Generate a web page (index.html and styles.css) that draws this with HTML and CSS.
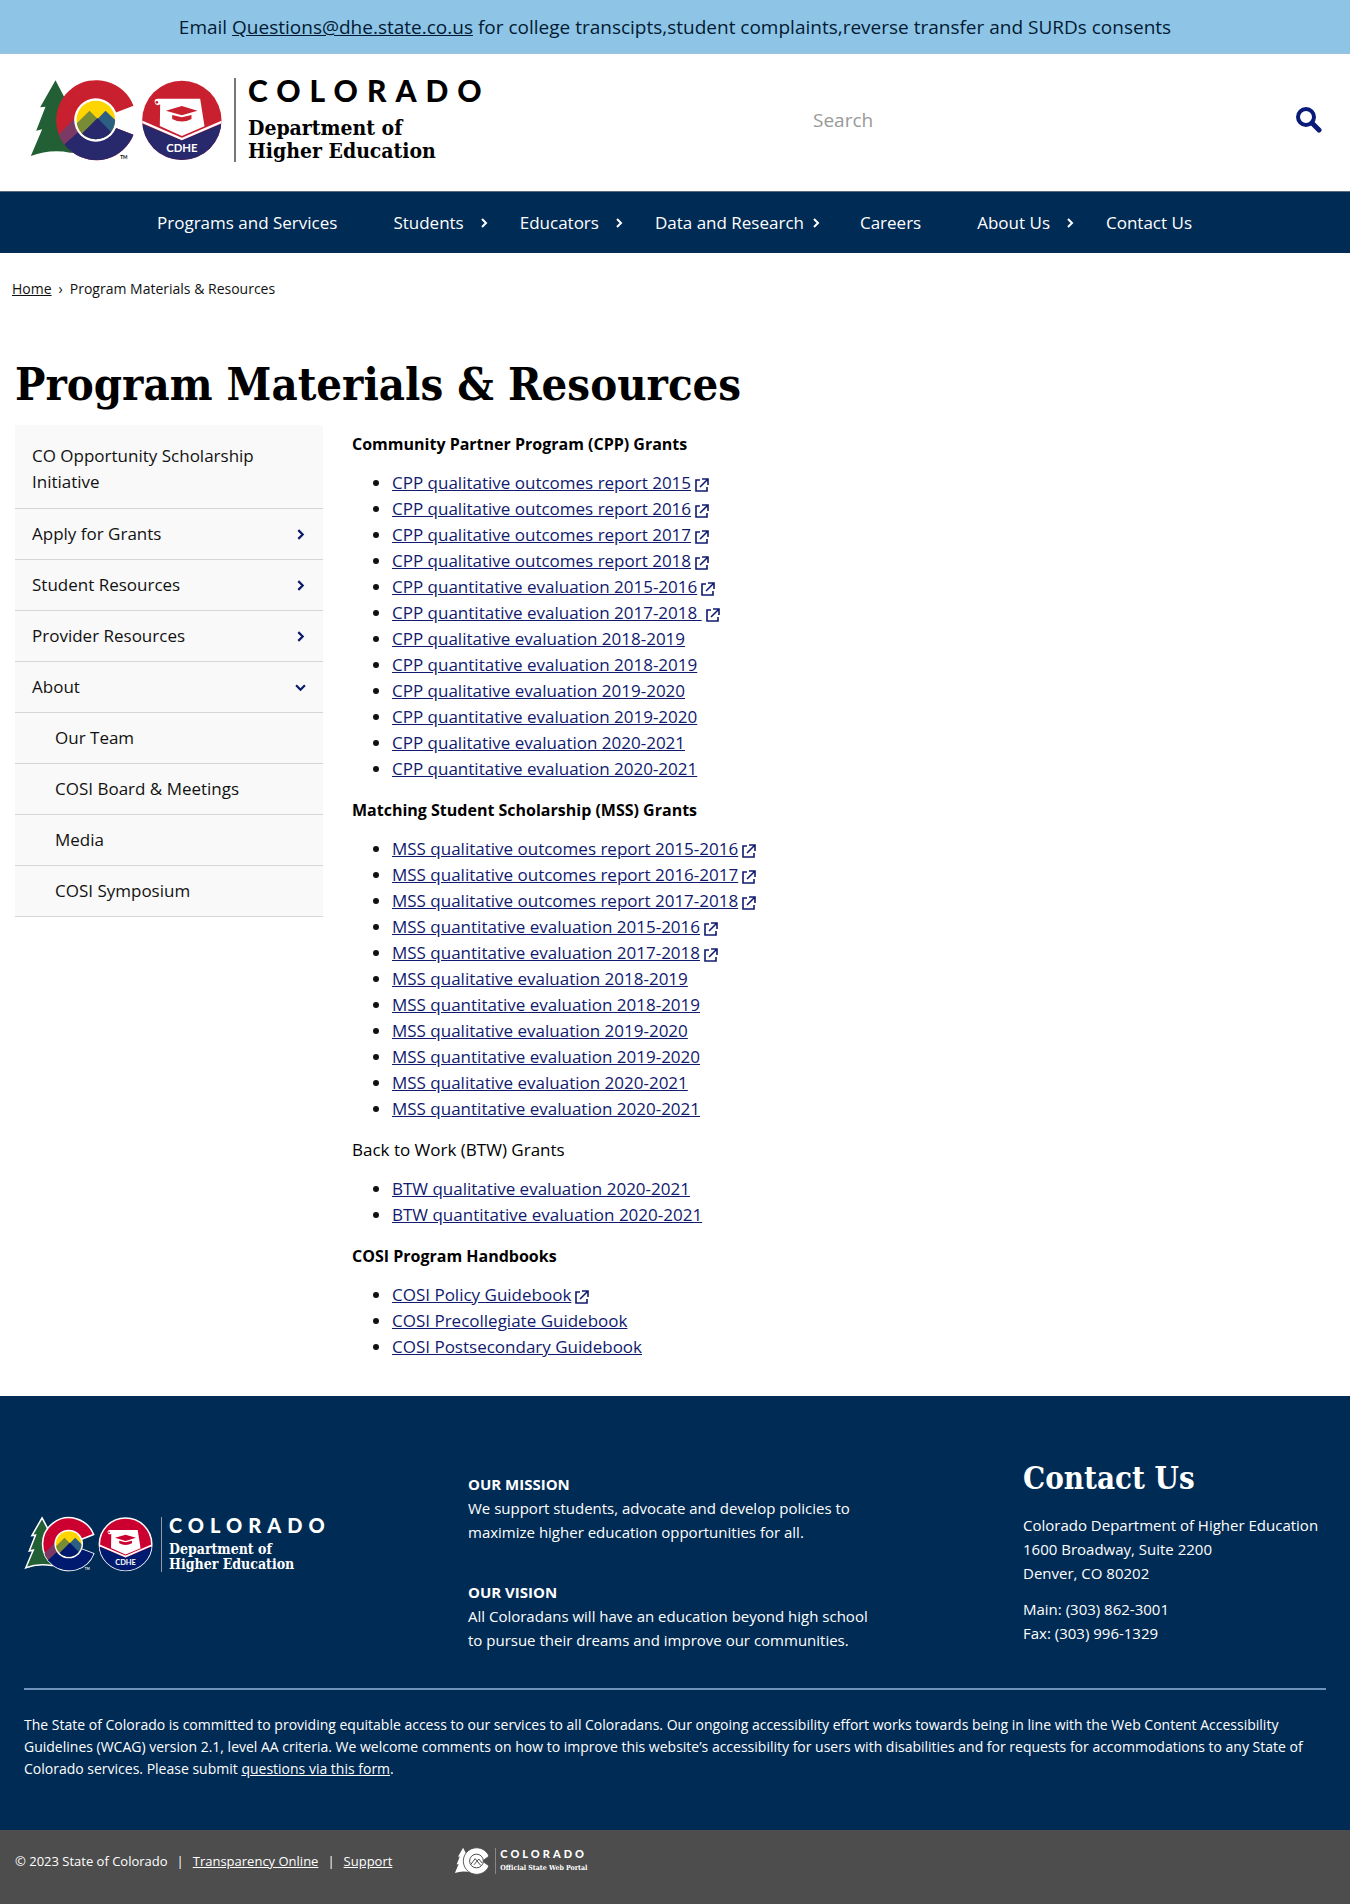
FILE: index.html
```html
<!DOCTYPE html>
<html lang="en">
<head>
<meta charset="utf-8">
<meta name="viewport" content="width=device-width, initial-scale=1">
<title>Program Materials &amp; Resources</title>
<link rel="stylesheet" href="styles.css">
</head>
<body>
<svg class="sprite" aria-hidden="true">
  <defs>
    <clipPath id="c-clip"><path d="M340 103A120 120 0 1 0 340 190L227 147Z"/></clipPath>
    <clipPath id="sun-clip"><circle cx="227" cy="146" r="58"/></clipPath>
    <clipPath id="seal-clip"><circle cx="485" cy="147" r="119"/></clipPath>
  </defs>
  <symbol id="co-mark" viewBox="24 20 590 252">
    <path class="outline" fill="#235f35" d="M106 27L60 108L76 106L48 178L66 174L32 254Q90 232 150 244L190 244L170 100L140 92Z"/>
    <path class="outline red" d="M340 103A120 120 0 1 0 340 190L227 147Z"/>
    <g clip-path="url(#c-clip)">
      <path fill="#7b3a63" d="M100 205L168 136L200 150L140 225Z"/>
      <path class="navy" d="M130 222L232 130L350 180V280H130Z"/>
    </g>
    <circle cx="227" cy="146" r="65" fill="#fff"/>
    <g clip-path="url(#sun-clip)">
      <path fill="#ffd500" d="M160 80H300V220H160Z"/>
      <path fill="#788c35" d="M160 165L208 118L256 166V210H160Z"/>
      <path fill="#2d5f83" d="M208 168L256 118L300 160V210H208Z"/>
      <path class="navy" d="M160 212L232 140L290 200V212Z"/>
    </g>
    <circle class="outline red" cx="485" cy="147" r="119"/>
    <g clip-path="url(#seal-clip)">
      <path class="navy" d="M360 155L485 207L610 155V270H360Z"/>
      <path fill="none" stroke="#fff" stroke-width="7" d="M362 150L485 203L608 150"/>
    </g>
    <path fill="#fff" d="M406 99Q398 84 412 82H540L553 165L485 194L419 164L420 99Q414 104 406 99Z"/>
    <circle class="red" cx="410" cy="93" r="4"/>
    <path class="red" d="M437 118L485 104L532 118L485 132ZM456 131L485 138L514 131V143Q485 158 456 143Z"/>
  </symbol>
  <symbol id="co-mono" viewBox="24 20 325 252">
    <path fill="#fff" d="M106 27L60 108L76 106L48 178L66 174L32 254Q90 232 150 244L190 244L170 100L140 92Z"/>
    <path fill="#fff" stroke="#4d4d4d" stroke-width="8" d="M340 103A120 120 0 1 0 340 190L280 147Z"/>
    <circle cx="227" cy="146" r="62" fill="#fff" stroke="#4d4d4d" stroke-width="9"/>
    <path fill="none" stroke="#4d4d4d" stroke-width="9" d="M175 178L215 125L265 186M205 180L248 128L278 165"/>
  </symbol>
  <symbol id="ext" viewBox="0 0 14 14">
    <path fill="none" stroke="currentColor" stroke-width="1.6" d="M5 2H1V13H12V9M7 1H13V7M13 1L5 9"/>
  </symbol>
  <symbol id="chev" viewBox="0 0 8 10">
    <path fill="none" stroke="currentColor" stroke-width="2" d="M2 1L6 5L2 9"/>
  </symbol>
</svg>

<div class="banner">Email <a href="mailto:Questions@dhe.state.co.us">Questions@dhe.state.co.us</a> for college transcipts,student complaints,reverse transfer and SURDs consents</div>

<header class="header">
  <a class="logo" href="#" aria-label="Colorado Department of Higher Education">
    <svg class="logo-mark" viewBox="24 20 590 252">
      <use href="#co-mark" x="24" y="20" width="590" height="252"/>
      <text class="seal-text" x="485" y="242" text-anchor="middle">CDHE</text>
      <text class="tm-text" x="300" y="264">TM</text>
    </svg>
    <span class="logo-words">
      <span class="logo-state">COLORADO</span>
      <span class="logo-dept">Department of<br>Higher Education</span>
    </span>
  </a>
  <form class="search">
    <input class="search-input" type="text" placeholder="Search" aria-label="Search">
    <button class="search-button" type="button" aria-label="Submit search">
      <svg class="search-icon" viewBox="0 0 26 26"><circle cx="10" cy="10" r="8" fill="none" stroke="currentColor" stroke-width="4"/><path d="M16 16L23 23" stroke="currentColor" stroke-width="5" stroke-linecap="round"/></svg>
    </button>
  </form>
</header>

<nav class="nav" aria-label="Main">
  <ul class="nav-list">
    <li><a href="#">Programs and Services</a></li>
    <li class="has-menu"><a href="#">Students</a><svg class="nav-chev"><use href="#chev"/></svg></li>
    <li class="has-menu"><a href="#">Educators</a><svg class="nav-chev"><use href="#chev"/></svg></li>
    <li class="has-menu is-long"><a href="#">Data and Research</a><svg class="nav-chev"><use href="#chev"/></svg></li>
    <li><a href="#">Careers</a></li>
    <li class="has-menu"><a href="#">About Us</a><svg class="nav-chev"><use href="#chev"/></svg></li>
    <li><a href="#">Contact Us</a></li>
  </ul>
</nav>

<nav class="crumbs" aria-label="Breadcrumb"><a href="#">Home</a><span>›</span><span>Program Materials &amp; Resources</span></nav>

<main class="main">
  <h1 class="title">Program Materials &amp; Resources</h1>
  <div class="columns">
    <aside>
      <ul class="side">
        <li class="side-first"><a href="#">CO Opportunity Scholarship Initiative</a></li>
        <li><a href="#">Apply for Grants</a><svg class="side-chev"><use href="#chev"/></svg></li>
        <li><a href="#">Student Resources</a><svg class="side-chev"><use href="#chev"/></svg></li>
        <li><a href="#">Provider Resources</a><svg class="side-chev"><use href="#chev"/></svg></li>
        <li><a href="#">About</a><svg class="side-chev is-open"><use href="#chev"/></svg></li>
        <li class="side-sub"><a href="#">Our Team</a></li>
        <li class="side-sub"><a href="#">COSI Board &amp; Meetings</a></li>
        <li class="side-sub"><a href="#">Media</a></li>
        <li class="side-sub"><a href="#">COSI Symposium</a></li>
      </ul>
    </aside>
    <article class="content">
      <p><strong>Community Partner Program (CPP) Grants</strong></p>
      <ul>
        <li><a href="#">CPP qualitative outcomes report 2015</a><svg class="ext"><use href="#ext"/></svg></li>
        <li><a href="#">CPP qualitative outcomes report 2016</a><svg class="ext"><use href="#ext"/></svg></li>
        <li><a href="#">CPP qualitative outcomes report 2017</a><svg class="ext"><use href="#ext"/></svg></li>
        <li><a href="#">CPP qualitative outcomes report 2018</a><svg class="ext"><use href="#ext"/></svg></li>
        <li><a href="#">CPP quantitative evaluation 2015-2016</a><svg class="ext"><use href="#ext"/></svg></li>
        <li><a href="#">CPP quantitative evaluation 2017-2018&nbsp;</a><svg class="ext"><use href="#ext"/></svg></li>
        <li><a href="#">CPP qualitative evaluation 2018-2019</a></li>
        <li><a href="#">CPP quantitative evaluation 2018-2019</a></li>
        <li><a href="#">CPP qualitative evaluation 2019-2020</a></li>
        <li><a href="#">CPP quantitative evaluation 2019-2020</a></li>
        <li><a href="#">CPP qualitative evaluation 2020-2021</a></li>
        <li><a href="#">CPP quantitative evaluation 2020-2021</a></li>
      </ul>
      <p><strong>Matching Student Scholarship (MSS) Grants</strong></p>
      <ul>
        <li><a href="#">MSS qualitative outcomes report 2015-2016</a><svg class="ext"><use href="#ext"/></svg></li>
        <li><a href="#">MSS qualitative outcomes report 2016-2017</a><svg class="ext"><use href="#ext"/></svg></li>
        <li><a href="#">MSS qualitative outcomes report 2017-2018</a><svg class="ext"><use href="#ext"/></svg></li>
        <li><a href="#">MSS quantitative evaluation 2015-2016</a><svg class="ext"><use href="#ext"/></svg></li>
        <li><a href="#">MSS quantitative evaluation 2017-2018</a><svg class="ext"><use href="#ext"/></svg></li>
        <li><a href="#">MSS qualitative evaluation 2018-2019</a></li>
        <li><a href="#">MSS quantitative evaluation 2018-2019</a></li>
        <li><a href="#">MSS qualitative evaluation 2019-2020</a></li>
        <li><a href="#">MSS quantitative evaluation 2019-2020</a></li>
        <li><a href="#">MSS qualitative evaluation 2020-2021</a></li>
        <li><a href="#">MSS quantitative evaluation 2020-2021</a></li>
      </ul>
      <p>Back to Work (BTW) Grants</p>
      <ul>
        <li><a href="#">BTW qualitative evaluation 2020-2021</a></li>
        <li><a href="#">BTW quantitative evaluation 2020-2021</a></li>
      </ul>
      <p><strong>COSI Program Handbooks</strong></p>
      <ul>
        <li><a href="#">COSI Policy Guidebook</a><svg class="ext"><use href="#ext"/></svg></li>
        <li><a href="#">COSI Precollegiate Guidebook</a></li>
        <li><a href="#">COSI Postsecondary Guidebook</a></li>
      </ul>
    </article>
  </div>
</main>

<footer>
  <div class="footer">
    <div class="footer-top">
      <a class="logo logo-small" href="#" aria-label="Colorado Department of Higher Education">
        <svg class="logo-mark" viewBox="24 20 590 252">
          <use href="#co-mark" x="24" y="20" width="590" height="252"/>
          <text class="seal-text" x="485" y="242" text-anchor="middle">CDHE</text>
          <text class="tm-text" x="300" y="264">TM</text>
        </svg>
        <span class="logo-words">
          <span class="logo-state">COLORADO</span>
          <span class="logo-dept">Department of<br>Higher Education</span>
        </span>
      </a>
      <div class="mission">
        <p><strong>OUR MISSION</strong><br>We support students, advocate and develop policies to<br>maximize higher education opportunities for all.</p>
        <p><strong>OUR VISION</strong><br>All Coloradans will have an education beyond high school<br>to pursue their dreams and improve our communities.</p>
      </div>
      <div class="contact">
        <h2>Contact Us</h2>
        <p>Colorado Department of Higher Education<br>1600 Broadway, Suite 2200<br>Denver, CO 80202</p>
        <p>Main: (303) 862-3001<br>Fax: (303) 996-1329</p>
      </div>
    </div>
    <p class="statement">The State of Colorado is committed to providing equitable access to our services to all Coloradans. Our ongoing accessibility effort works towards being in line with the Web Content Accessibility Guidelines (WCAG) version 2.1, level AA criteria. We welcome comments on how to improve this website’s accessibility for users with disabilities and for requests for accommodations to any State of Colorado services. Please submit <a href="#">questions via this form</a>.</p>
  </div>
  <div class="legal">
    <div class="legal-links"><span>© 2023 State of Colorado</span><span>|</span><a href="#">Transparency Online</a><span>|</span><a href="#">Support</a></div>
    <a class="logo logo-portal" href="#" aria-label="Colorado Official State Web Portal">
      <svg class="logo-mark"><use href="#co-mono"/></svg>
      <span class="logo-words">
        <span class="logo-state">COLORADO</span>
        <span class="logo-dept">Official State Web Portal</span>
      </span>
    </a>
  </div>
</footer>
</body>
</html>
```

FILE: styles.css
```css
* { box-sizing: border-box; }
body {
  margin: 0;
  background: #fff;
  color: #111;
  font-family: "Open Sans", "Noto Sans", sans-serif;
  font-size: 17px;
  line-height: 26px;
}
ul { list-style: none; margin: 0; padding: 0; }
p, h1, h2 { margin: 0; }
a { color: inherit; }
svg { flex: none; }
.sprite { position: absolute; width: 0; height: 0; }
.outline { stroke: var(--logo-outline, none); stroke-width: 7px; }
.red { fill: var(--logo-red, #c8202f); }
.navy { fill: var(--logo-navy, #28286c); }
.seal-text { font: 700 34px Lato, sans-serif; fill: #fff; }
.tm-text { font: 700 14px Lato, sans-serif; fill: currentColor; }

.banner {
  min-height: 54px;
  padding: 14px 16px 13px;
  background: #8ec5e6;
  border-bottom: 1px solid #9fbfdc;
  color: #021a33;
  font-size: 19px;
  text-align: center;
}

.header {
  display: grid;
  grid-template-columns: 1fr 1fr;
  align-items: center;
  min-height: 137px;
  padding: 0 28px 6px;
}
.logo { display: flex; align-items: center; color: #000; text-decoration: none; justify-self: start; }
.logo-mark { width: 197px; height: 84px; }
.logo-words {
  display: flex;
  flex-direction: column;
  gap: 14px;
  margin-left: 9px;
  padding-left: 12px;
  border-left: 2px solid #777;
}
.logo-state { font: 900 30px/24px Lato, sans-serif; letter-spacing: 9px; }
.logo-dept {
  font-family: "DejaVu Serif Condensed", "DejaVu Serif", serif;
  font-weight: 700;
  font-size: 21px;
  line-height: 23px;
}
.search { display: flex; align-items: center; padding-left: 128px; }
.search-input {
  flex: 1;
  min-width: 0;
  height: 40px;
  padding: 0 10px;
  border: 0;
  background: none;
  font: 19px "Open Sans", sans-serif;
}
.search-input::placeholder { color: #999; opacity: 1; }
.search-button { padding: 0; border: 0; background: none; color: #0a1a78; }
.search-icon { display: block; width: 26px; height: 26px; }

.nav { background: #002b54; border-top: 1px solid #5a6b7d; }
.nav-list {
  display: flex;
  justify-content: center;
  padding-left: 55px;
  color: #fff;
  line-height: 61px;
}
.nav-list li { display: flex; align-items: center; padding-right: 56px; }
.nav-list .has-menu { padding-right: 32px; }
.nav-list .is-long { padding-right: 40px; }
.nav-list a { text-decoration: none; white-space: nowrap; }
.nav-chev { width: 8px; height: 10px; margin-left: 16px; }
.is-long .nav-chev { margin-left: 8px; }

.crumbs { display: flex; gap: 7px; padding: 23px 12px 0; font-size: 14px; }

.main { padding: 53px 15px 36px; }
.title {
  font-family: "DejaVu Serif Condensed", "DejaVu Serif", serif;
  font-size: 45px;
  line-height: 60px;
  color: #000;
}
.columns { display: grid; grid-template-columns: 308px 1fr; gap: 29px; padding-top: 10px; }
.side li {
  display: flex;
  align-items: center;
  justify-content: space-between;
  min-height: 51px;
  padding: 12px 18px 12px 17px;
  background: #f9f9f9;
  border-bottom: 1px solid #d6d6d6;
}
.side .side-first { min-height: 84px; padding-top: 16px; padding-right: 50px; }
.side .side-sub { padding-left: 40px; }
.side a { text-decoration: none; }
.side-chev { width: 9px; height: 11px; color: #0a1a6b; }
.side-chev.is-open { transform: rotate(90deg); }

.content { padding-top: 6px; }
.content p { color: #000; }
.content strong { font-size: 16px; }
.content ul { list-style: disc; margin: 13px 0 15px; padding-left: 40px; }
.content ul:last-child { margin-bottom: 0; }
.content li a { color: #101a6e; }
.ext { width: 14px; height: 14px; margin-left: 4px; color: #101a6e; vertical-align: -3px; }

.footer { padding: 62px 24px 50px; background: #002b54; color: #fff; font-size: 15px; line-height: 24px; }
.footer-top {
  display: grid;
  grid-template-columns: 444px 1fr 303px;
  align-items: start;
  padding-bottom: 36px;
  border-bottom: 2px solid #6f93bb;
}
.mission { display: grid; gap: 36px; padding-top: 14px; }
.contact h2 {
  margin-bottom: 15px;
  font-family: "DejaVu Serif Condensed", "DejaVu Serif", serif;
  font-size: 31px;
  line-height: 40px;
}
.contact p + p { margin-top: 12px; }
.statement { padding-top: 24px; font-size: 14px; line-height: 22px; }

.logo-small {
  --logo-outline: #fff;
  --logo-red: #cc0030;
  --logo-navy: #001a70;
  align-self: center;
  margin-bottom: 22px;
  color: #fff;
}
.logo-small .logo-mark { width: 130px; height: 56px; }
.logo-small .logo-words { gap: 9px; margin-left: 7px; padding-left: 7px; border-left: 1px solid #99a; }
.logo-small .logo-state { font-size: 20px; line-height: 16px; letter-spacing: 6px; }
.logo-small .logo-dept { font-size: 14px; line-height: 15px; }

.legal {
  display: flex;
  align-items: center;
  gap: 62px;
  min-height: 74px;
  padding: 0 15px 12px;
  background: #4d4d4d;
  color: #fff;
  font-size: 13px;
}
.legal-links { display: flex; gap: 9px; }
.logo-portal { color: #fff; }
.logo-portal .logo-mark { width: 36px; height: 28px; }
.logo-portal .logo-words { gap: 2px; margin-left: 5px; padding-left: 4px; border-left: 1px solid #888; }
.logo-portal .logo-state { font-size: 11px; line-height: 12px; letter-spacing: 3px; }
.logo-portal .logo-dept { font-size: 7px; line-height: 12px; }
```
